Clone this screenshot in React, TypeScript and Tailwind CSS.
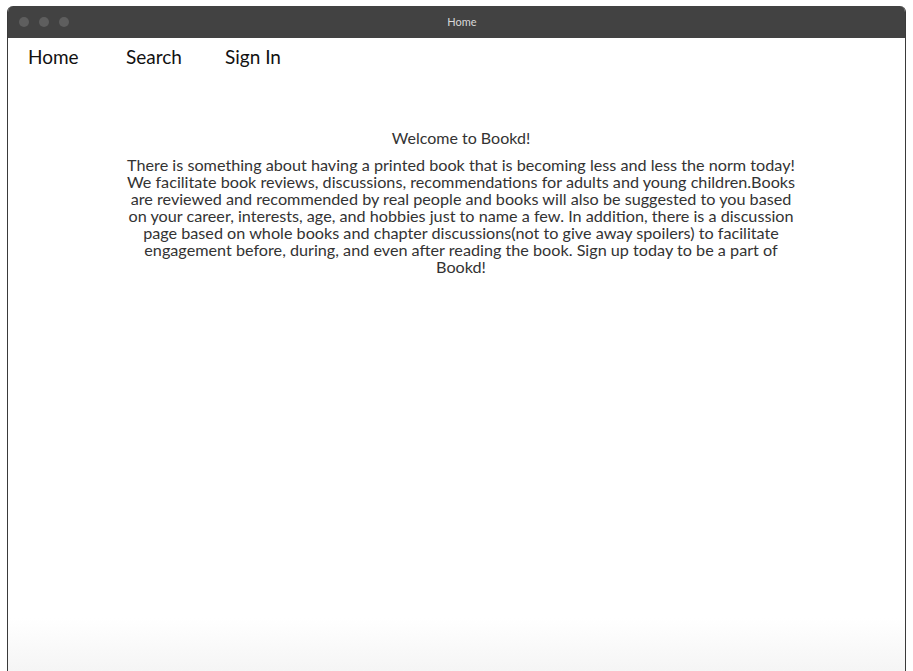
import React from "react";

const lines = [
  "There is something about having a printed book that is becoming less and less the norm today!",
  "We facilitate book reviews, discussions, recommendations for adults and young children.Books",
  "are reviewed and recommended by real people and books will also be suggested to you based",
  "on your career, interests, age, and hobbies just to name a few. In addition, there is a discussion",
  "page based on whole books and chapter discussions(not to give away spoilers) to facilitate",
  "engagement before, during, and even after reading the book. Sign up today to be a part of",
  "Bookd!",
];

export default function App() {
  const font = { fontFamily: '"Source Sans Pro", Lato, "Noto Sans", sans-serif' };
  return (
    <div className="w-[913px] h-[671px] bg-white overflow-hidden pt-[6px] px-[7px]" style={font}>
      <div className="flex flex-col h-[665px] rounded-t-[6px] overflow-hidden border-x border-[#3a3a3a] bg-gradient-to-b from-white from-[92%] to-[#f5f5f5]">
        <div className="relative h-[32px] bg-[#424242] flex items-center shrink-0">
          <div className="flex gap-[10px] pl-[11px]">
            <span className="w-[10px] h-[10px] rounded-full bg-[#5e5e5e]" />
            <span className="w-[10px] h-[10px] rounded-full bg-[#5e5e5e]" />
            <span className="w-[10px] h-[10px] rounded-full bg-[#5e5e5e]" />
          </div>
          <div className="absolute inset-0 flex items-center justify-center text-[11px] text-[#d8d8d8] pl-[11px]">Home</div>
        </div>
        <nav className="flex items-center h-[38px] pl-[20px] text-[19px] text-[#111]">
          <span className="w-[98px]">Home</span>
          <span className="w-[99px]">Search</span>
          <span>Sign In</span>
        </nav>
        <div className="flex flex-col items-center pt-[52px] pl-[9px] text-[#333]">
          <div className="text-[16px] leading-[20px]">Welcome to Bookd!</div>
          <div className="w-[700px] flex flex-col items-center text-[16.2px] leading-[17px] mt-[8px] whitespace-nowrap">
            {lines.map((l, i) => (
              <span key={i} className="block h-[17px]">{l}</span>
            ))}
          </div>
        </div>
      </div>
    </div>
  );
}
